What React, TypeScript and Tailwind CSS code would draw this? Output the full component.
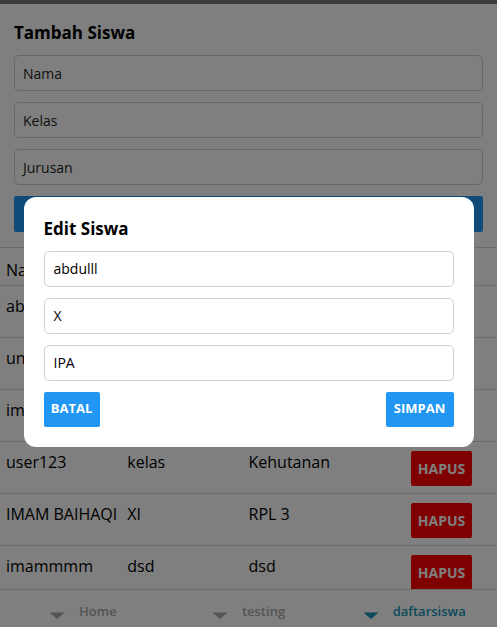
import React from "react";

const siswa = [
  { nama: "abdulll", kelas: "X", jurusan: "IPA" },
  { nama: "unknown", kelas: "XII", jurusan: "IPS" },
  { nama: "imam", kelas: "X", jurusan: "TKJ" },
  { nama: "user123", kelas: "kelas", jurusan: "Kehutanan" },
  { nama: "IMAM BAIHAQI", kelas: "XI", jurusan: "RPL 3" },
  { nama: "imammmm", kelas: "dsd", jurusan: "dsd" },
];

const tabs = [
  { label: "Home", active: false },
  { label: "testing", active: false },
  { label: "daftarsiswa", active: true },
];

function Caret({ color }: { color: string }) {
  return (
    <svg width="16" height="8" viewBox="0 0 16 8" className="mt-[22px]">
      <polygon points="0.5,0.5 15.5,0.5 8,7" fill={color} />
    </svg>
  );
}

export default function App() {
  return (
    <div className="relative h-[627px] overflow-hidden bg-white flex flex-col text-[#222] font-['Open_Sans','Noto_Sans',sans-serif]">
      <div className="h-[4px] bg-[#787878]" />

      <div className="flex-1 overflow-hidden">
        <div className="px-[14px] pt-[17px]">
          <h2 className="text-[17px] leading-[24px] font-bold text-black mb-[10px]">Tambah Siswa</h2>
          {["Nama", "Kelas", "Jurusan"].map((p) => (
            <div
              key={p}
              className="h-[36px] mb-[11px] rounded-[5px] border border-[#cfcfcf] px-[8px] flex items-center text-[14px] text-[#222]"
            >
              {p}
            </div>
          ))}
          <div className="h-[36px] rounded-[2px] bg-[#2196f3] flex items-center justify-center text-white text-[14px] font-bold">
            TAMBAH
          </div>
        </div>

        <div className="mt-[15px]">
          <div className="h-[39px] border-y border-[#d6d6d6] px-[6px] pt-[10px] grid grid-cols-4 text-[16px] leading-[24px] text-black">
            <div>Nama</div>
            <div>Kelas</div>
            <div>Jurusan</div>
            <div>Aksi</div>
          </div>
          {siswa.map((s, i) => (
            <div
              key={i}
              className="h-[52px] border-b border-[#d6d6d6] px-[6px] py-[8px] grid grid-cols-4 items-start text-[16px] leading-[24px] text-black"
            >
              <div className="min-w-0 whitespace-nowrap">{s.nama}</div>
              <div className="min-w-0">{s.kelas}</div>
              <div className="min-w-0">{s.jurusan}</div>
              <div className="flex justify-end pr-[19px]">
                <div className="mt-[1px] h-[35px] w-[61px] rounded-[2px] bg-[#ff0000] flex items-center justify-center text-white text-[14px] font-bold">
                  HAPUS
                </div>
              </div>
            </div>
          ))}
        </div>
      </div>

      <div className="h-[38px] shrink-0 border-t border-[#d6d6d6] bg-white flex">
        {tabs.map((t) => (
          <div key={t.label} className="flex-1 flex justify-center gap-[14px]">
            <Caret color={t.active ? "#1594b8" : "#a8a8a8"} />
            <span
              className={`text-[13px] leading-[18px] pt-[12px] font-semibold ${
                t.active ? "text-[#1594b8]" : "text-[#a8a8a8]"
              }`}
            >
              {t.label}
            </span>
          </div>
        ))}
      </div>

      <div className="absolute inset-0 bg-black/50 flex items-center justify-center pt-[16px]">
        <div className="w-[450px] rounded-[12px] bg-white p-[20px]">
          <h3 className="text-[17px] leading-[24px] font-bold text-black mb-[10px]">Edit Siswa</h3>
          {["abdulll", "X", "IPA"].map((v) => (
            <div
              key={v}
              className="h-[36px] mb-[11px] rounded-[5px] border border-[#cfcfcf] px-[9px] flex items-center text-[14px] text-black"
            >
              {v}
            </div>
          ))}
          <div className="flex justify-between">
            <div className="h-[35px] w-[56px] rounded-[2px] bg-[#2196f3] flex items-center justify-center text-white text-[13px] font-bold">
              BATAL
            </div>
            <div className="h-[35px] w-[68px] rounded-[2px] bg-[#2196f3] flex items-center justify-center text-white text-[13px] font-bold">
              SIMPAN
            </div>
          </div>
        </div>
      </div>
    </div>
  );
}
